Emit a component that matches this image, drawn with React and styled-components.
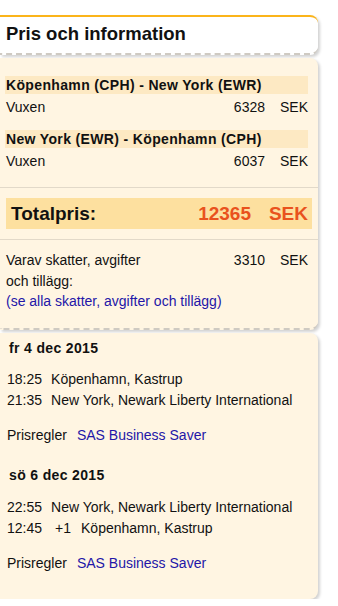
import React from "react";
import styled, { createGlobalStyle } from "styled-components";

const Global = createGlobalStyle`
  html, body { margin: 0; padding: 0; background: #fff; }
  body { font-family: "Liberation Sans", Arial, sans-serif; color: #111; }
`;

const Wrap = styled.div`
  width: 318px;
  padding-top: 15px;
  display: flex;
  flex-direction: column;
  gap: 3px;
`;

const Card = styled.div`
  background: ${(p) => (p.$white ? "#fff" : "#fff5e2")};
  border-top: ${(p) => (p.$accent ? "2px solid #fbb41a" : "none")};
  border-bottom: ${(p) => (p.$dashed ? "2px dashed #cfcac2" : "none")};
  border-radius: 0 8px 8px 0;
  box-shadow: 2px 2px 3px rgba(0, 0, 0, 0.18);
  padding: ${(p) => p.$pad || "0"};
`;

const Title = styled.h1`
  margin: 0;
  font-size: 18.5px;
  font-weight: bold;
  line-height: 32px;
  padding: 1px 6px 3px;
`;

const Band = styled.div`
  margin: 0 10px 0 5px;
  background: #fde9c3;
  font-weight: bold;
  font-size: 14px;
  letter-spacing: 0.35px;
  line-height: 18px;
  padding: 0 1px;
`;

const PriceRow = styled.div`
  display: flex;
  align-items: flex-start;
  margin: 0 10px 0 6px;
  font-size: 14px;
  line-height: 18px;
  padding-top: 4px;
`;

const Label = styled.div`
  flex: 1;
`;

const Amount = styled.div`
  text-align: right;
`;

const Currency = styled.div`
  width: 43px;
  text-align: right;
`;

const Segment = styled.div`
  margin-bottom: ${(p) => p.$mb || "0"};
`;

const Rule = styled.div`
  height: 1px;
  background: #e2d9c9;
  margin: ${(p) => p.$m};
`;

const TotalBand = styled.div`
  margin: 0 6px 0 6px;
  background: #fde09f;
  height: 31px;
  display: flex;
  align-items: center;
  font-weight: bold;
  font-size: 19px;
`;

const TotalLabel = styled.div`
  flex: 1;
  padding-left: 5px;
`;

const TotalAmount = styled.div`
  color: #e9521d;
`;

const TotalCurrency = styled.div`
  color: #e9521d;
  width: 57px;
  padding-right: 4px;
  text-align: right;
`;

const TaxBlock = styled.div`
  margin: 0 10px 0 6px;
  padding: 10px 0 16px;
  font-size: 14px;
  line-height: 20.5px;
`;

const TaxRow = styled.div`
  display: flex;
  align-items: flex-start;
`;

const TaxLabel = styled.div`
  width: 150px;
  margin-right: auto;
`;

const Link = styled.a`
  color: #2316a8;
  text-decoration: none;
  margin-left: ${(p) => p.$ml || "0"};
`;

const DateHead = styled.div`
  font-weight: bold;
  font-size: 14px;
  letter-spacing: 0.35px;
  line-height: 18px;
  padding-left: 9px;
  margin-bottom: ${(p) => p.$mb || "12px"};
`;

const FlightLine = styled.div`
  font-size: 14px;
  line-height: 21.5px;
  padding-left: 7px;
`;

const Time = styled.span`
  margin-right: 9px;
`;

const Plus = styled.span`
  margin-left: 4px;
  margin-right: 10px;
`;

const Rules = styled.div`
  font-size: 14px;
  line-height: 18px;
  padding-left: 7px;
  margin-top: 14px;
  margin-bottom: ${(p) => p.$mb};
`;

export default function App() {
  return (
    <>
      <Global />
      <Wrap>
        <Card $white $accent $dashed>
          <Title>Pris och information</Title>
        </Card>
        <Card $dashed $pad="18px 0 0">
          <Segment $mb="14px">
            <Band>Köpenhamn (CPH) - New York (EWR)</Band>
            <PriceRow>
              <Label>Vuxen</Label>
              <Amount>6328</Amount>
              <Currency>SEK</Currency>
            </PriceRow>
          </Segment>
          <Segment>
            <Band>New York (EWR) - Köpenhamn (CPH)</Band>
            <PriceRow>
              <Label>Vuxen</Label>
              <Amount>6037</Amount>
              <Currency>SEK</Currency>
            </PriceRow>
          </Segment>
          <Rule $m="17px 0 10px" />
          <TotalBand>
            <TotalLabel>Totalpris:</TotalLabel>
            <TotalAmount>12365</TotalAmount>
            <TotalCurrency>SEK</TotalCurrency>
          </TotalBand>
          <Rule $m="10px 0 0" />
          <TaxBlock>
            <TaxRow>
              <TaxLabel>Varav skatter, avgifter och tillägg:</TaxLabel>
              <Amount>3310</Amount>
              <Currency>SEK</Currency>
            </TaxRow>
            <Link href="#">(se alla skatter, avgifter och tillägg)</Link>
          </TaxBlock>
        </Card>
        <Card $pad="6px 0 0">
          <DateHead>fr 4 dec 2015</DateHead>
          <FlightLine>
            <Time>18:25</Time>Köpenhamn, Kastrup
          </FlightLine>
          <FlightLine>
            <Time>21:35</Time>New York, Newark Liberty International
          </FlightLine>
          <Rules $mb="22px">
            Prisregler<Link href="#" $ml="10px">SAS Business Saver</Link>
          </Rules>
          <DateHead $mb="13px">sö 6 dec 2015</DateHead>
          <FlightLine>
            <Time>22:55</Time>New York, Newark Liberty International
          </FlightLine>
          <FlightLine>
            <Time>12:45</Time>
            <Plus>+1</Plus>Köpenhamn, Kastrup
          </FlightLine>
          <Rules $mb="27px">
            Prisregler<Link href="#" $ml="10px">SAS Business Saver</Link>
          </Rules>
        </Card>
      </Wrap>
    </>
  );
}
